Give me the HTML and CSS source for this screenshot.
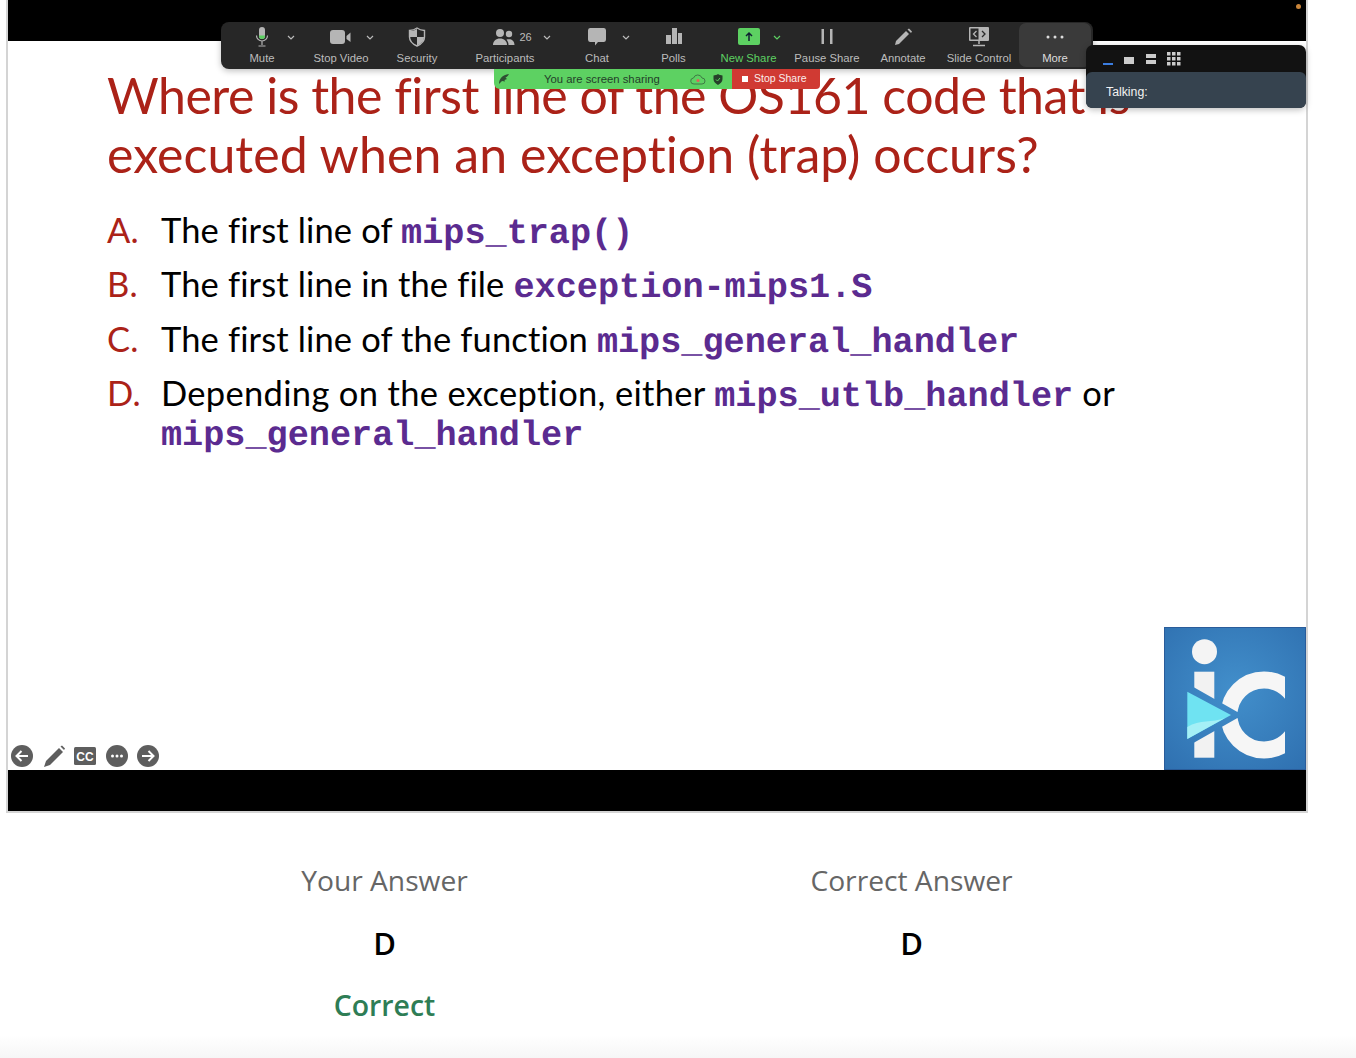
FILE: index.html
```html
<!DOCTYPE html>
<html>
  <head>
    <meta charset="UTF-8">
    <title>Question review</title>
    <link rel="stylesheet" href="styles.css">
  </head>
  <body>
    <div class="video">
      <div class="black-bar"></div>
      <div class="slide">
        <h1 class="title"><span class="title-tight">Where is the first line of the OS161 code that is</span> executed when an exception (trap) occurs?</h1>
        <ol class="choices">
          <li><span class="letter">A.</span><p>The first line of <code>mips_trap()</code></p></li>
          <li><span class="letter">B.</span><p>The first line in the file <code>exception-mips1.S</code></p></li>
          <li><span class="letter">C.</span><p>The first line of the function <code>mips_general_handler</code></p></li>
          <li><span class="letter">D.</span><p class="wide">Depending on the exception, either <code>mips_utlb_handler</code> or <code>mips_general_handler</code></p></li>
        </ol>

        <div class="slide-controls">
          <svg width="24" height="24" viewBox="0 0 24 24"><circle cx="12" cy="12" r="11" fill="#5e5e5e"/><path d="M18 12H7M11.500 7 6.500 12l5 5" fill="none" stroke="#fff" stroke-width="2"/></svg>
          <svg width="24" height="24" viewBox="0 0 24 24"><path d="M2 23l2-6L17 4l4 4L8 21z" fill="#5e5e5e"/><path d="M18.500 2.500l1.500-1 3 3-1 1.500z" fill="#5e5e5e"/></svg>
          <svg width="24" height="24" viewBox="0 0 24 24"><rect x="1" y="3" width="22" height="18" rx="1.500" fill="#5e5e5e"/><text x="12" y="17" class="cc-text">CC</text></svg>
          <svg width="24" height="24" viewBox="0 0 24 24"><circle cx="12" cy="12" r="11" fill="#5e5e5e"/><circle cx="7.500" cy="12" r="1.500" fill="#fff"/><circle cx="12" cy="12" r="1.500" fill="#fff"/><circle cx="16.500" cy="12" r="1.500" fill="#fff"/></svg>
          <svg width="24" height="24" viewBox="0 0 24 24"><circle cx="12" cy="12" r="11" fill="#5e5e5e"/><path d="M6 12h11M12.500 7l5 5-5 5" fill="none" stroke="#fff" stroke-width="2"/></svg>
        </div>

        <svg class="logo" width="142" height="143" viewBox="0 0 142 143">
          <defs>
            <radialGradient id="logo-bg" gradientUnits="userSpaceOnUse" cx="71" cy="64" r="105">
              <stop offset="0" stop-color="#428fcb"/>
              <stop offset="1" stop-color="#2f70b0"/>
            </radialGradient>
            <clipPath id="c-clip"><rect x="0" y="0" width="121" height="143"/></clipPath>
          </defs>
          <rect width="142" height="143" fill="url(#logo-bg)"/>
          <rect x="0.500" y="0.500" width="141" height="142" fill="none" stroke="#2a5c9a"/>
          <circle cx="40.500" cy="24.700" r="12.500" fill="#f4f4f4"/>
          <rect x="30.300" y="44.700" width="20" height="86" fill="#f2f2f2"/>
          <circle cx="100" cy="88" r="35" fill="none" stroke="#f6f6f6" stroke-width="17" clip-path="url(#c-clip)"/>
          <path d="M10 49L73 84.700H100V91.300H73L10 127z" fill="url(#logo-bg)"/>
          <path d="M23.300 64.700L67 88 23.300 112z" fill="#6fe3f2"/>
          <path d="M23.300 100C36 92 48 96 61 91L23.300 112z" fill="#a5f0f6"/>
        </svg>
      </div>
      <div class="black-bar"></div>

      <span class="camera-dot"></span>

      <div class="toolbar">
        <div class="tool w-mute">
          <svg width="22" height="22" viewBox="0 0 22 22"><rect x="8" y="1" width="6" height="12" rx="3" fill="#b5b5b5"/><path d="M8 9.500h6V10a3 3 0 0 1-6 0z" fill="#5dd162"/><path d="M5.500 9.500a5.500 5.500 0 0 0 11 0M11 15v4M7.500 20h7" fill="none" stroke="#b5b5b5" stroke-width="1.200"/></svg>
          <span>Mute</span>
          <svg class="chevron" width="8" height="5" viewBox="0 0 8 5"><path d="M1 1l3 3 3-3" fill="none" stroke="#bbb" stroke-width="1.200"/></svg>
        </div>
        <div class="tool w-76 w-video">
          <svg width="24" height="22" viewBox="0 0 24 22"><rect x="1" y="4" width="15" height="14" rx="3" fill="#b5b5b5"/><path d="M17.500 10l4-3.500v9.500l-4-3z" fill="#b5b5b5"/></svg>
          <span>Stop Video</span>
          <svg class="chevron" width="8" height="5" viewBox="0 0 8 5"><path d="M1 1l3 3 3-3" fill="none" stroke="#bbb" stroke-width="1.200"/></svg>
        </div>
        <div class="tool w-76">
          <svg width="22" height="22" viewBox="0 0 22 22"><path d="M11 2c2 1.500 4.500 2.300 7.500 2.500V11c0 4-3 7-7.500 9-4.500-2-7.500-5-7.500-9V4.500C6.500 4.300 9 3.500 11 2z" fill="none" stroke="#b5b5b5" stroke-width="1.400"/><path d="M11 3v8h7c0 4-3 6.500-7 8.500V11H4V5c3 0 5-1 7-2z" fill="#b5b5b5"/></svg>
          <span>Security</span>
        </div>
        <div class="tool w-participants">
          <div class="icon-row">
            <svg width="24" height="22" viewBox="0 0 24 22"><circle cx="8" cy="7" r="4" fill="#b5b5b5"/><circle cx="17" cy="8" r="3.200" fill="#b5b5b5"/><path d="M1 19c0-4 3-6.500 7-6.500s7 2.500 7 6.500z" fill="#b5b5b5"/><path d="M16.500 19c0-2.500-.8-4-2-5.500 4-1.200 8 .5 8 5.500z" fill="#b5b5b5"/></svg>
            <em class="count">26</em>
          </div>
          <span>Participants</span>
          <svg class="chevron" width="8" height="5" viewBox="0 0 8 5"><path d="M1 1l3 3 3-3" fill="none" stroke="#bbb" stroke-width="1.200"/></svg>
        </div>
        <div class="tool w-chat">
          <svg width="22" height="22" viewBox="0 0 22 22"><path d="M4 2h14a2.500 2.500 0 0 1 2 2.500v9A2.500 2.500 0 0 1 18 16h-6l-3 3.500V16H4a2.500 2.500 0 0 1-2-2.500v-9A2.500 2.500 0 0 1 4 2z" fill="#b5b5b5"/></svg>
          <span>Chat</span>
          <svg class="chevron" width="8" height="5" viewBox="0 0 8 5"><path d="M1 1l3 3 3-3" fill="none" stroke="#bbb" stroke-width="1.200"/></svg>
        </div>
        <div class="tool w-polls">
          <svg width="22" height="22" viewBox="0 0 22 22"><rect x="3" y="9" width="5" height="9" fill="#b5b5b5"/><rect x="9" y="2" width="5" height="16" fill="#b5b5b5"/><rect x="15" y="7" width="4" height="11" fill="#b5b5b5"/></svg>
          <span>Polls</span>
        </div>
        <div class="tool w-new-share green">
          <svg width="22" height="22" viewBox="0 0 22 22"><rect x="0" y="2" width="22" height="17" rx="2" fill="#5dd162"/><path d="M11 15V7M8 10l3-3 3 3" fill="none" stroke="#123" stroke-width="1.500"/></svg>
          <span>New Share</span>
          <svg class="chevron" width="8" height="5" viewBox="0 0 8 5"><path d="M1 1l3 3 3-3" fill="none" stroke="#5dd162" stroke-width="1.200"/></svg>
        </div>
        <div class="tool w-76">
          <svg width="22" height="22" viewBox="0 0 22 22"><rect x="5.500" y="3" width="2.500" height="15" fill="#b5b5b5"/><rect x="14" y="3" width="2.500" height="15" fill="#b5b5b5"/></svg>
          <span>Pause Share</span>
        </div>
        <div class="tool w-76">
          <svg width="22" height="22" viewBox="0 0 22 22"><path d="M4 15L14 5l3 3L7 18l-4 1z" fill="#b5b5b5"/><path d="M15.500 3.500l1.500-1 3 3-1 1.500z" fill="#b5b5b5"/></svg>
          <span>Annotate</span>
        </div>
        <div class="tool w-76">
          <svg width="24" height="22" viewBox="0 0 24 22"><rect x="2" y="1" width="20" height="14" rx="1" fill="#b5b5b5"/><rect x="3.500" y="2.500" width="8" height="11" fill="#2a2a2a"/><path d="M15 5l3 3-3 3" fill="none" stroke="#2a2a2a" stroke-width="1.300"/><path d="M9.500 5l-3 3 3 3" fill="none" stroke="#b5b5b5" stroke-width="1.300"/><path d="M12 15v3M6 19.500h12" stroke="#b5b5b5" stroke-width="1.500"/></svg>
          <span>Slide Control</span>
        </div>
        <div class="tool w-more active">
          <svg width="22" height="22" viewBox="0 0 22 22"><circle cx="4" cy="11" r="1.500" fill="#ddd"/><circle cx="11" cy="11" r="1.500" fill="#ddd"/><circle cx="18" cy="11" r="1.500" fill="#ddd"/></svg>
          <span>More</span>
        </div>
      </div>

      <div class="share-status">
        <div class="sharing">
          <svg width="12" height="12" viewBox="0 0 12 12"><path d="M1 11C1 6 4 2 11 1 10 3 9 4 7.500 4.500L9 6 6.500 7 7 8.500 4 8z" fill="#2f4f33"/></svg>
          <span class="sharing-text">You are screen sharing</span>
          <svg class="cloud" width="16" height="11" viewBox="0 0 16 11"><path d="M4 10a3 3 0 0 1-.5-6A4.500 4.500 0 0 1 12 4a3 3 0 0 1 0 6z" fill="none" stroke="#3f7a45"/><circle cx="8" cy="6.500" r="1.500" fill="#e0605a"/></svg>
          <svg width="10" height="11" viewBox="0 0 10 11"><path d="M5 0c1.500 1 3 1.300 4.500 1.500V5c0 3-2 4.500-4.500 6C2.500 9.500.5 8 .5 5V1.500C2 1.300 3.500 1 5 0z" fill="#26402a"/><path d="M3 5.500l1.500 1.500 2.500-3" fill="none" stroke="#5dd162"/></svg>
        </div>
        <div class="stop-share"><i class="stop-box"></i>Stop Share</div>
      </div>

      <div class="talking-panel">
        <div class="panel-head">
          <i class="mode-min"></i>
          <i class="mode-one"></i>
          <i class="mode-two"><b></b><b></b></i>
          <svg width="14" height="14" viewBox="0 0 14 14" fill="#ccc"><rect x="0" y="0" width="3.500" height="3.500"/><rect x="5" y="0" width="3.500" height="3.500"/><rect x="10" y="0" width="3.500" height="3.500"/><rect x="0" y="5" width="3.500" height="3.500"/><rect x="5" y="5" width="3.500" height="3.500"/><rect x="10" y="5" width="3.500" height="3.500"/><rect x="0" y="10" width="3.500" height="3.500"/><rect x="5" y="10" width="3.500" height="3.500"/><rect x="10" y="10" width="3.500" height="3.500"/></svg>
        </div>
        <div class="panel-body">Talking:</div>
      </div>
    </div>

    <div class="answers">
      <div class="answer">
        <h3>Your Answer</h3>
        <p class="value">D</p>
        <p class="result">Correct</p>
      </div>
      <div class="answer">
        <h3>Correct Answer</h3>
        <p class="value">D</p>
      </div>
    </div>
  </body>
</html>
```

FILE: styles.css
```css
html {
  background-color: #fff;
}
body {
  margin: 0;
  height: 1058px;
  overflow: hidden;
  font-family: "Open Sans", sans-serif;
  background: linear-gradient(to bottom, #fff 1035px, #f6f6f6 1058px);
}

.video {
  position: relative;
  width: 1298px;
  height: 811px;
  margin-left: 6px;
  border-left: 2px solid #d4d4d4;
  border-right: 2px solid #d4d4d4;
  border-bottom: 2px solid #d4d4d4;
  display: flex;
  flex-direction: column;
}
.black-bar {
  height: 41px;
  background-color: #000;
}
.slide {
  position: relative;
  flex: 1;
  background-color: #fff;
  padding: 25px 100px 0 99px;
}
.title {
  margin: 0 0 25.500px;
  font-family: Lato, sans-serif;
  font-weight: 400;
  font-size: 50px;
  line-height: 59px;
  font-variant-ligatures: none;
  letter-spacing: 0.070px;
  color: #ab2218;
}
.title-tight {
  letter-spacing: -0.500px;
}
.choices {
  margin: 0;
  padding: 0;
  list-style: none;
  font-family: Lato, sans-serif;
  font-size: 34.500px;
  line-height: 39px;
  font-variant-ligatures: none;
  letter-spacing: 0.140px;
  color: #000;
}
.choices li {
  display: grid;
  grid-template-columns: 54px 1fr;
  margin-bottom: 15.500px;
}
.choices p {
  margin: 0;
}
.choices .wide {
  letter-spacing: 0.320px;
}
.letter {
  color: #ab2218;
}
code {
  font-family: "Liberation Mono", monospace;
  font-weight: 700;
  font-size: 35.200px;
  line-height: 0;
  letter-spacing: 0;
  text-rendering: geometricPrecision;
  color: #5b2b90;
}

.slide-controls {
  position: absolute;
  left: 2px;
  bottom: 2px;
  display: flex;
  gap: 7.500px;
}
.cc-text {
  font-family: "Liberation Sans", sans-serif;
  font-size: 12px;
  font-weight: 700;
  fill: #fff;
  text-anchor: middle;
}
.logo {
  position: absolute;
  right: 0;
  bottom: 0;
  display: block;
}
.camera-dot {
  position: absolute;
  top: 4px;
  right: 5px;
  width: 5px;
  height: 5px;
  border-radius: 50%;
  background-color: #c9853a;
}

.toolbar {
  position: absolute;
  left: 213px;
  top: 22px;
  width: 872px;
  height: 47px;
  display: flex;
  background-color: #272727;
  border-radius: 8px;
  box-shadow: 0 2px 6px rgba(0, 0, 0, 0.25);
  color: #bcbcbc;
  font-family: "Liberation Sans", sans-serif;
  font-size: 11.300px;
}
.tool {
  position: relative;
  display: flex;
  flex-direction: column;
  align-items: center;
  padding-top: 4px;
  box-sizing: border-box;
}
.tool span {
  margin-top: 4px;
  white-space: nowrap;
}
.tool .chevron {
  position: absolute;
  top: 13px;
  right: 8px;
}
.icon-row {
  display: flex;
  align-items: center;
  gap: 3px;
  margin-left: 14px;
}
.count {
  font-style: normal;
  font-size: 11px;
}
.w-mute { width: 82px; }
.w-76 { width: 76px; }
.w-participants { width: 100px; }
.w-chat { width: 84px; }
.w-polls { width: 69px; }
.w-new-share { width: 81px; }
.w-more { width: 72px; margin-left: 2px; }
.w-video .chevron { right: 5px; }
.w-participants .chevron { right: 4px; }
.w-chat .chevron { right: 9px; }
.w-new-share .chevron { right: 8px; }
.green { color: #5dd162; }
.active {
  background-color: #3a3a3a;
  border-radius: 7px;
  margin-top: 1px;
  margin-bottom: 2px;
  padding-top: 3px;
  color: #ddd;
}

.share-status {
  position: absolute;
  left: 486px;
  top: 69px;
  display: flex;
  height: 20px;
  font-family: "Liberation Sans", sans-serif;
  font-size: 11.300px;
}
.sharing {
  width: 238px;
  box-sizing: border-box;
  padding: 0 9px 0 4px;
  display: flex;
  align-items: center;
  background-color: #5dd162;
  border-bottom-left-radius: 6px;
  color: #24402a;
}
.sharing-text {
  margin-left: 34px;
}
.cloud {
  margin-left: auto;
  margin-right: 7px;
}
.stop-share {
  width: 88px;
  box-sizing: border-box;
  padding: 0 0 2px 10px;
  display: flex;
  align-items: center;
  gap: 6px;
  background-color: #d03a33;
  border-bottom-right-radius: 4px;
  font-size: 10.500px;
  color: #fbeeee;
}
.stop-box {
  width: 6px;
  height: 6px;
  margin-top: 2px;
  background-color: #fff;
}

.talking-panel {
  position: absolute;
  right: 0;
  top: 45px;
  width: 220px;
  border-radius: 7px;
  background-color: #121212;
  box-shadow: 0 2px 6px rgba(0, 0, 0, 0.25);
  font-family: "Liberation Sans", sans-serif;
}
.panel-head {
  height: 27px;
  box-sizing: border-box;
  padding: 1px 0 0 17px;
  display: flex;
  gap: 11px;
  align-items: center;
}
.mode-min {
  width: 10px;
  height: 2px;
  margin-top: 9px;
  background-color: #3b7de0;
}
.mode-one {
  width: 10px;
  height: 7px;
  margin-top: 3px;
  background-color: #ccc;
}
.mode-two {
  display: flex;
  flex-direction: column;
  gap: 2px;
  width: 10px;
  margin-left: 1px;
}
.mode-two b {
  height: 4px;
  background-color: #ccc;
}
.panel-body {
  height: 36px;
  box-sizing: border-box;
  padding: 13px 20px 0;
  background-color: #36434f;
  border-radius: 6px;
  font-size: 12.300px;
  color: #f2f2f2;
}

.answers {
  display: grid;
  grid-template-columns: 527px 527px;
  margin-left: 121px;
  text-align: center;
}
.answer h3 {
  margin: 47px 0 0;
  font-weight: 400;
  font-size: 28.200px;
  line-height: 40px;
  color: #666;
}
.value {
  margin: 22px 0 0;
  font-size: 31px;
  font-weight: 600;
  line-height: 42px;
  color: #000;
}
.result {
  margin: 20px 0 0;
  font-size: 28.400px;
  font-weight: 600;
  line-height: 42px;
  color: #2e7d55;
}
```
